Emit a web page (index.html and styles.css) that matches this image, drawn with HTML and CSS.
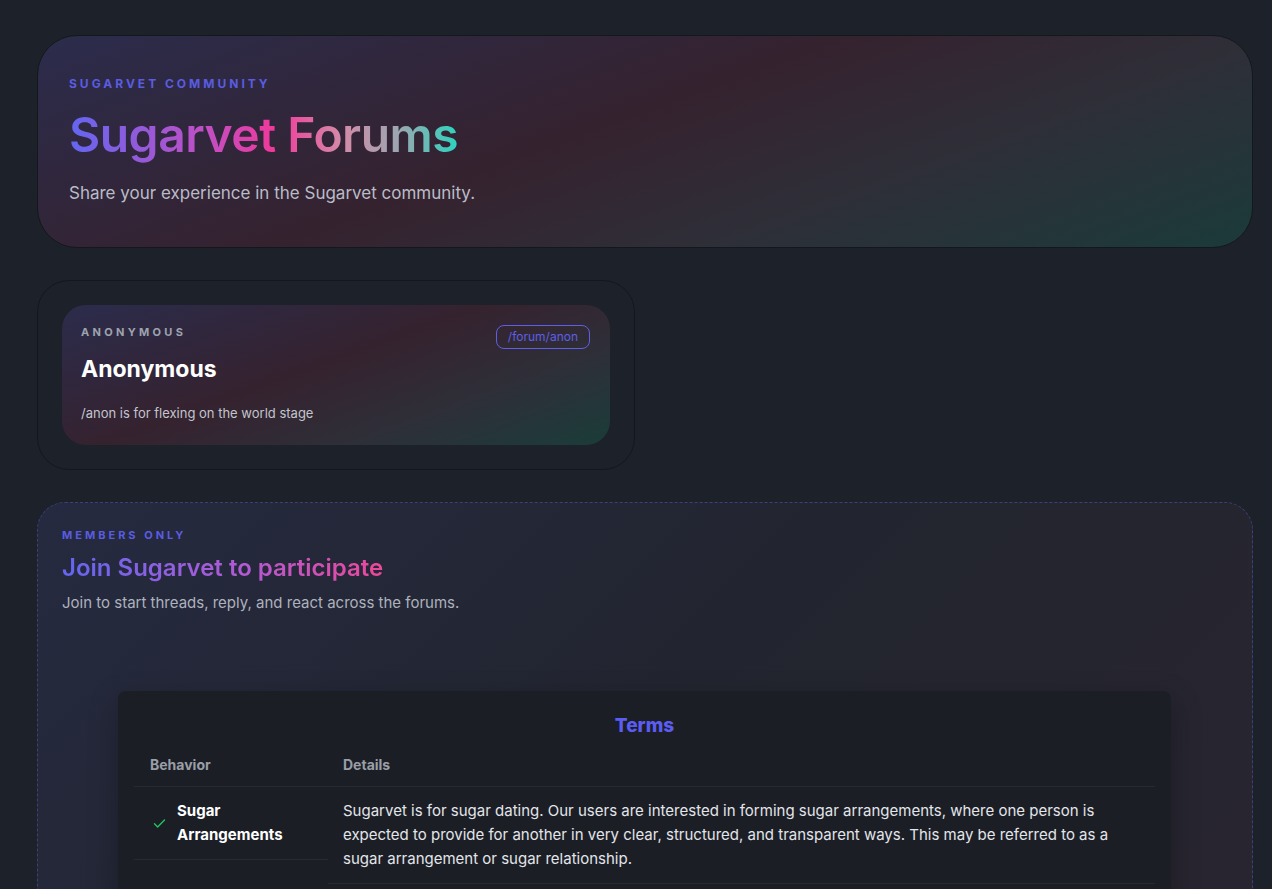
FILE: index.html
```html
<!DOCTYPE html>
<html lang="en">
<head>
    <meta charset="UTF-8">
    <meta name="viewport" content="width=device-width, initial-scale=1.0">
    <title>Sugarvet Forums</title>
    <link rel="stylesheet" href="styles.css">
</head>
<body>

<main class="page">
    <!-- Hero -->
    <header class="hero">
        <p class="eyebrow eyebrow-lg">Sugarvet Community</p>
        <h1 class="hero-title">Sugarvet Forums</h1>
        <p class="hero-sub">Share your experience in the Sugarvet community.</p>
    </header>

    <!-- Forum list -->
    <section class="forum-grid">
        <div class="forum-shell">
            <a class="forum-card" href="#">
                <div class="forum-top">
                    <span class="forum-tag">Anonymous</span>
                    <span class="forum-path">/forum/anon</span>
                </div>
                <h2 class="forum-name">Anonymous</h2>
                <p class="forum-desc">/anon is for flexing on the world stage</p>
            </a>
        </div>
    </section>

    <!-- Members gate -->
    <section class="members">
        <p class="eyebrow">Members only</p>
        <h2 class="members-title">Join Sugarvet to participate</h2>
        <p class="members-sub">Join to start threads, reply, and react across the forums.</p>

        <div class="terms">
            <h3 class="terms-title">Terms</h3>
            <div class="terms-table">
                <div class="th">Behavior</div>
                <div class="th">Details</div>

                <div class="td behavior">
                    <svg class="check" viewBox="0 0 24 24" width="15" height="15" fill="none" stroke="#22c55e" stroke-width="2.2" stroke-linecap="round" stroke-linejoin="round">
                        <path d="M4 12.5l5 5L20 6.5"/>
                    </svg>
                    <span>Sugar Arrangements</span>
                </div>
                <div class="td details">Sugarvet is for sugar dating. Our users are interested in forming sugar arrangements, where one person is expected to provide for another in very clear, structured, and transparent ways. This may be referred to as a sugar arrangement or sugar relationship.</div>
            </div>
        </div>
    </section>
</main>

</body>
</html>
```

FILE: styles.css
```css
/* Base */
* {
    margin: 0;
    padding: 0;
    box-sizing: border-box;
}

body {
    font-family: 'Inter', 'Open Sans', sans-serif;
    background: #1d2129;
    color: #e5e7eb;
}

.page {
    padding: 35px 19px 40px 37px;
    display: flex;
    flex-direction: column;
    gap: 32px;
}

.eyebrow {
    font-size: 11px;
    line-height: 16px;
    font-weight: 700;
    letter-spacing: 3px;
    text-transform: uppercase;
    color: #5a5ce0;
}

.eyebrow-lg {
    font-size: 12px;
}

/* Hero */
.hero {
    border: 1px solid #14171c;
    border-radius: 40px;
    padding: 40px 31px 41px;
    background: linear-gradient(160deg, #2b2c4c 0%, #35222f 45%, #2e2f38 70%, #1b3a39 100%);
}

.hero-title {
    margin-top: 14px;
    font-size: 48px;
    line-height: 58px;
    font-weight: 600;
    letter-spacing: -0.5px;
    display: inline-block;
    background: linear-gradient(90deg, #6366f1 0%, #c04fc4 35%, #f0399a 53%, #d48aa8 70%, #9aa7b0 85%, #2dd4bf 100%);
    -webkit-background-clip: text;
    background-clip: text;
    color: transparent;
}

.hero-sub {
    margin-top: 16px;
    font-size: 17px;
    line-height: 26px;
    color: #b9bcc7;
}

/* Forum cards */
.forum-grid {
    display: grid;
    grid-template-columns: 1fr 1fr;
    gap: 20px;
}

.forum-shell {
    border: 1px solid #14171c;
    border-radius: 32px;
    padding: 24px;
}

.forum-card {
    display: block;
    text-decoration: none;
    border-radius: 24px;
    padding: 20px 20px 23px 19px;
    background: linear-gradient(160deg, #2b2c4c 0%, #35222f 45%, #2e2f38 72%, #1a3c39 100%);
}

.forum-top {
    display: flex;
    justify-content: space-between;
    align-items: flex-start;
}

.forum-tag {
    font-size: 11px;
    line-height: 14px;
    font-weight: 700;
    letter-spacing: 3.3px;
    text-transform: uppercase;
    color: #9ea3ae;
}

.forum-path {
    font-size: 12px;
    line-height: 14px;
    color: #5d5fe6;
    border: 1px solid #5d5fe6;
    border-radius: 8px;
    padding: 4px 11px;
}

.forum-name {
    margin-top: 6px;
    font-size: 23px;
    line-height: 28px;
    font-weight: 700;
    color: #fff;
}

.forum-desc {
    margin-top: 21px;
    font-size: 13px;
    line-height: 18px;
    color: #c2c5cd;
}

/* Members gate */
.members {
    border: 1px dashed #3c3f78;
    border-radius: 28px;
    padding: 24px 24px 48px;
    background: linear-gradient(135deg, #252a40 0%, #22252f 50%, #292530 100%);
}

.members-title {
    margin-top: 10px;
    font-size: 24px;
    line-height: 30px;
    font-weight: 600;
    display: inline-block;
    background: linear-gradient(90deg, #6366f1 0%, #b05bd4 55%, #ec4899 100%);
    -webkit-background-clip: text;
    background-clip: text;
    color: transparent;
}

.members-sub {
    margin-top: 9px;
    font-size: 15px;
    line-height: 22px;
    color: #aeb2bd;
}

/* Terms table */
.terms {
    margin: 77px 57px 0 56px;
    background: #1b1e25;
    border-radius: 8px;
    padding: 22px 16px 24px;
    box-shadow: 0 10px 30px rgba(0, 0, 0, 0.25);
}

.terms-title {
    text-align: center;
    font-size: 19px;
    line-height: 26px;
    font-weight: 800;
    color: #5b5cf2;
}

.terms-table {
    margin-top: 8px;
    display: grid;
    grid-template-columns: 194px 1fr;
    align-items: start;
}

.th {
    font-size: 14px;
    line-height: 18px;
    font-weight: 700;
    color: #9a9ea7;
    padding: 9px 16px 12px;
    border-bottom: 1px solid #262a32;
}

.th + .th {
    padding-left: 15px;
}

.td {
    font-size: 15px;
    line-height: 24px;
    padding: 12px 16px 12px;
    border-bottom: 1px solid #262a32;
}

.behavior {
    display: flex;
    align-items: center;
    gap: 10px;
    padding-left: 18px;
    font-weight: 700;
    color: #fff;
}

.check {
    flex-shrink: 0;
}

.details {
    padding-left: 15px;
    color: #e3e5ea;
}
```
